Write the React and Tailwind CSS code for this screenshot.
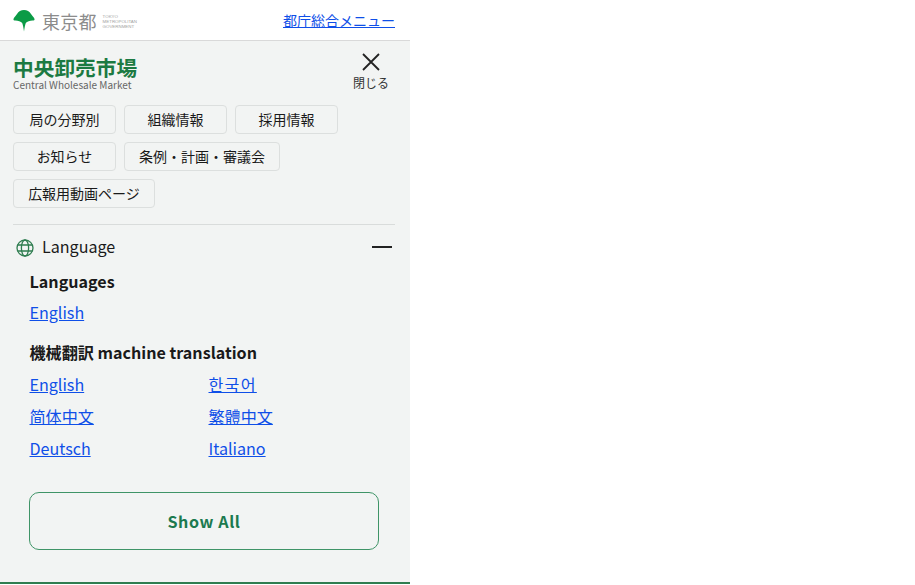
const font = { fontFamily: '"Noto Sans CJK JP", sans-serif' };

function Chip({ children, className }) {
  return (
    <a className={`flex h-[29px] items-center justify-center rounded-[4px] border border-[#dcdfde] pb-[2px] text-[14px] leading-none text-[#1a1a1a] ${className}`}>
      {children}
    </a>
  );
}

function L({ children, className = "" }) {
  return <a className={`text-[#0f4fe8] underline text-[16.1px] leading-[32px] ${className}`}>{children}</a>;
}

export default function App() {
  return (
    <div className="w-[915px] h-[585px] bg-white overflow-hidden" style={font}>
      <div className="w-[410px]">
        <header className="flex h-[41px] items-center justify-between border-b border-[#d9d9d9] pl-[13px] pr-[15px]">
          <div className="flex items-center pt-[2px]">
            <svg width="22" height="22" viewBox="0 0 22 22">
              <path d="M11 0C14 0 16.5 1.5 18 4C19.5 6 21 7.5 21.5 9C21.8 10 21 10.5 19.5 10.6C17 10.8 14 11.4 12.8 13C12 15 11.5 18 11 21.5C10.5 18 10 15 9.2 13C8 11.4 5 10.8 2.5 10.6C1 10.5 0.2 10 0.5 9C1 7.5 2.5 6 4 4C5.5 1.5 8 0 11 0Z" fill="#0b9b46" />
            </svg>
            <span className="ml-[7px] text-[18px] leading-none tracking-[0.2px] text-[#8c8c8c]">東京都</span>
            <span className="ml-[6px] flex flex-col text-[4.4px] leading-[5px] text-[#a3a3a3]" style={{ fontFamily: '"Liberation Sans", sans-serif' }}>
              <span>TOKYO</span>
              <span>METROPOLITAN</span>
              <span>GOVERNMENT</span>
            </span>
          </div>
          <a className="text-[14px] text-[#0f4fe8] underline">都庁総合メニュー</a>
        </header>
        <div className="h-[543px] border-b-2 border-[#2f7d50] bg-[#f2f4f3] pl-[13px] pr-[15px]">
          <div className="flex h-[64px] items-start justify-between">
            <div className="pt-[14px]">
              <div className="text-[20.7px] font-bold leading-[24px] text-[#1c7a42]">中央卸売市場</div>
              <div className="text-[10px] leading-[12px] text-[#666]">Central Wholesale Market</div>
            </div>
            <div className="mr-[6px] flex w-[36px] flex-col items-center pt-[11px]">
              <svg width="20" height="20" viewBox="0 0 20 20" stroke="#222" strokeWidth="1.8" fill="none">
                <path d="M2 2L18 18M18 2L2 18" />
              </svg>
              <span className="mt-[3px] text-[12px] leading-[16px] text-[#333]">閉じる</span>
            </div>
          </div>
          <div className="flex flex-col gap-[8px] border-b border-[#d9dcdb] pb-[16px]">
            <div className="flex gap-[8px]">
              <Chip className="w-[103px]">局の分野別</Chip>
              <Chip className="w-[103px]">組織情報</Chip>
              <Chip className="w-[103px]">採用情報</Chip>
            </div>
            <div className="flex gap-[8px]">
              <Chip className="w-[103px]">お知らせ</Chip>
              <Chip className="w-[156px]">条例・計画・審議会</Chip>
            </div>
            <div className="flex gap-[8px]">
              <Chip className="w-[142px]">広報用動画ページ</Chip>
            </div>
          </div>
          <div className="flex h-[45px] items-center justify-between px-[3px] pb-[2px]">
            <div className="flex items-center gap-[8px]">
              <svg width="18" height="18" viewBox="0 0 18 18" fill="none" stroke="#2f7d50" strokeWidth="1.3" className="mt-[2px]">
                <circle cx="9" cy="9" r="8" />
                <ellipse cx="9" cy="9" rx="3.6" ry="8" />
                <path d="M1.6 6H16.4M1.6 12H16.4" />
              </svg>
              <span className="text-[16.1px] leading-none text-[#1a1a1a]">Language</span>
            </div>
            <div className="h-[2px] w-[20px] bg-[#222]" />
          </div>
          <div className="pl-[16.5px]">
            <div className="mt-[-2px] text-[16.1px] font-bold leading-[26px] text-[#1a1a1a]">Languages</div>
            <div className="mt-[2px]"><L>English</L></div>
            <div className="mt-[11px] text-[16.1px] font-bold leading-[26px] text-[#1a1a1a]">機械翻訳 machine translation</div>
            <div className="mt-[3px] grid grid-cols-[179px_1fr]">
              <L>English</L>
              <L className="tracking-[1.3px]">한국어</L>
              <L>简体中文</L>
              <L>繁體中文</L>
              <L>Deutsch</L>
              <L>Italiano</L>
            </div>
            <button className="mt-[28px] ml-[-0.5px] flex h-[58px] w-[350px] items-center justify-center rounded-[10px] border border-[#3f9467] text-[16.1px] font-bold tracking-[0.6px] text-[#1c7a4f]">
              Show All
            </button>
          </div>
        </div>
      </div>
    </div>
  );
}
